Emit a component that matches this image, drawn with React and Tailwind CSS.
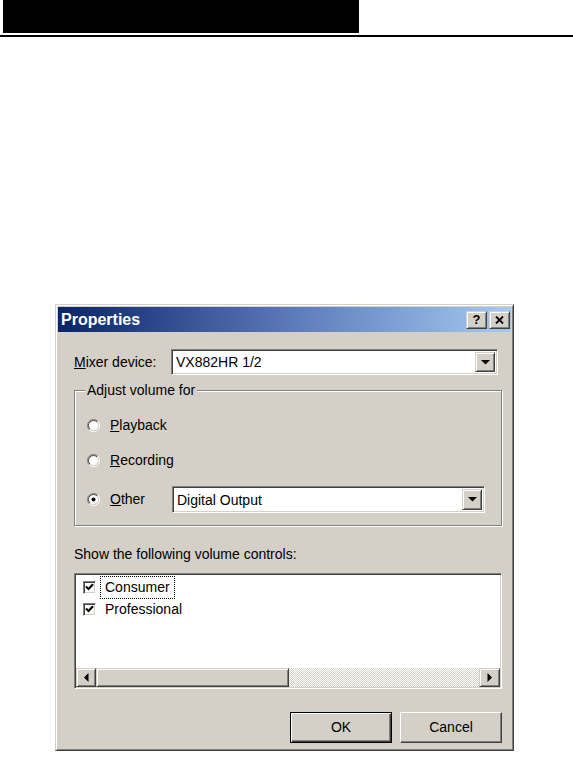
const raised =
  "border border-t-[#d4d0c8] border-l-[#d4d0c8] border-b-[#404040] border-r-[#404040] shadow-[inset_1px_1px_0_#fff,inset_-1px_-1px_0_#808080] bg-[#d4d0c8]";
const sunken =
  "border border-t-[#808080] border-l-[#808080] border-b-white border-r-white shadow-[inset_1px_1px_0_#404040,inset_-1px_-1px_0_#d4d0c8]";

function DownArrow() {
  return (
    <svg width="9" height="5" viewBox="0 0 9 5">
      <path d="M0 0H9L4.5 4.5Z" fill="#000" />
    </svg>
  );
}

function Combo({ text, width, height }) {
  return (
    <div
      className={`${sunken} bg-white flex items-stretch p-[2px]`}
      style={{ width, height }}
    >
      <div className="flex-1 flex items-center pl-[2px] leading-none">{text}</div>
      <div className={`${raised} w-[20px] flex items-center justify-center`}>
        <DownArrow />
      </div>
    </div>
  );
}

function Radio({ checked }) {
  return (
    <svg width="13" height="13" viewBox="0 0 13 13" className="shrink-0">
      <path d="M2.2 10.8A6 6 0 0 1 10.8 2.2" fill="none" stroke="#808080" strokeWidth="1" />
      <path d="M10.8 2.2A6 6 0 0 1 2.2 10.8" fill="none" stroke="#ffffff" strokeWidth="1" />
      <circle cx="6.5" cy="6.5" r="5" fill="#fff" />
      <path d="M2.96 10.04A5 5 0 0 1 10.04 2.96" fill="none" stroke="#404040" strokeWidth="1" />
      <path d="M10.04 2.96A5 5 0 0 1 2.96 10.04" fill="none" stroke="#d4d0c8" strokeWidth="1" />
      {checked && <circle cx="6.5" cy="6.5" r="2" fill="#000" />}
    </svg>
  );
}

function CheckBox() {
  return (
    <div className={`${sunken} bg-white w-[13px] h-[13px] shrink-0 flex items-center justify-center`}>
      <svg width="9" height="8" viewBox="0 0 9 8">
        <path d="M1 3.5L3.5 6L8 1.2" fill="none" stroke="#000" strokeWidth="2.1" />
      </svg>
    </div>
  );
}

function Btn({ children, def }) {
  if (def) {
    return (
      <div className="w-[102px] h-[31px] border border-black">
        <div className="w-full h-full bg-[#d4d0c8] shadow-[inset_1px_1px_0_#fff,inset_-1px_-1px_0_#404040,inset_-2px_-2px_0_#808080] flex items-center justify-center">
          {children}
        </div>
      </div>
    );
  }
  return (
    <div className="w-[102px] h-[31px] bg-[#d4d0c8] border border-t-white border-l-white border-b-[#404040] border-r-[#404040] shadow-[inset_-1px_-1px_0_#808080] flex items-center justify-center">
      {children}
    </div>
  );
}

export default function App() {
  return (
    <div className="w-[573px] h-[762px] bg-white font-['Liberation_Sans',Arial,sans-serif] text-[14px] text-black overflow-hidden">
      <div className="ml-[3px] w-[356px] h-[33px] bg-black" />
      <div className="mt-[2px] h-[2px] bg-black" />

      <div className="ml-[55px] mt-[267px] w-[459px] h-[447px] bg-[#d4d0c8] p-[2px] border border-t-[#d4d0c8] border-l-[#d4d0c8] border-b-[#404040] border-r-[#404040] shadow-[inset_1px_1px_0_#fff,inset_-1px_-1px_0_#808080]">
        {/* title bar */}
        <div className="h-[25px] bg-linear-to-r from-[#0a246a] via-[#5a78b8] to-[#a6caf0] flex items-center justify-between pl-[3px] pr-[1px]">
          <span className="text-white font-bold text-[16px] leading-none">Properties</span>
          <div className="flex gap-[2px]">
            <div className={`${raised} w-[21px] h-[18px] flex items-center justify-center`}>
              <span className="font-bold text-[13px] leading-none">?</span>
            </div>
            <div className={`${raised} w-[21px] h-[18px] flex items-center justify-center`}>
              <svg width="9" height="8" viewBox="0 0 9 8">
                <path d="M1 0.5L8 7.5M8 0.5L1 7.5" stroke="#000" strokeWidth="1.8" />
              </svg>
            </div>
          </div>
        </div>

        <div className="pl-[16px]">
          {/* mixer row */}
          <div className="mt-[17px] flex items-center h-[26px]">
            <span className="w-[97px]">
              <span className="underline">M</span>ixer device:
            </span>
            <Combo text="VX882HR 1/2" width={327} height={26} />
          </div>

          {/* group box */}
          <div className="relative mt-[15px] w-[428px] h-[136px] border border-[#808080] shadow-[1px_1px_0_#fff,inset_1px_1px_0_#fff]">
            <span className="absolute left-[10px] top-[-10px] bg-[#d4d0c8] px-[2px] leading-[18px]">
              Adjust volume for
            </span>
            <div className="pl-[12px] pt-[21px] flex flex-col">
              <div className="h-[27px] flex items-center">
                <Radio />
                <span className="ml-[10px]">
                  <span className="underline">P</span>layback
                </span>
              </div>
              <div className="mt-[8px] h-[27px] flex items-center">
                <Radio />
                <span className="ml-[10px]">
                  <span className="underline">R</span>ecording
                </span>
              </div>
              <div className="mt-[12px] h-[27px] flex items-center">
                <div className="w-[85px] flex items-center">
                  <Radio checked />
                  <span className="ml-[10px]">
                    <span className="underline">O</span>ther
                  </span>
                </div>
                <Combo text="Digital Output" width={313} height={27} />
              </div>
            </div>
          </div>

          <div className="mt-[20px] leading-[16px]">Show the following volume controls:</div>

          {/* listbox */}
          <div className={`${sunken} bg-white mt-[11px] w-[428px] h-[116px] p-[1px] flex flex-col`}>
            <div className="flex-1 pt-[1px] pl-[7px]">
              <div className="h-[22px] flex items-center">
                <CheckBox />
                <span className="ml-[4px] h-[23px] px-[4px] border border-dotted border-black flex items-center">
                  Consumer
                </span>
              </div>
              <div className="h-[22px] flex items-center">
                <CheckBox />
                <span className="ml-[4px] h-[23px] px-[4px] border border-transparent flex items-center">
                  Professional
                </span>
              </div>
            </div>
            <div className="h-[19px] flex">
              <div className={`${raised} w-[20px] flex items-center justify-center`}>
                <svg width="5" height="9" viewBox="0 0 5 9">
                  <path d="M4.5 0V9L0 4.5Z" fill="#000" />
                </svg>
              </div>
              <div className={`${raised} w-[193px]`} />
              <div className="flex-1 bg-[repeating-conic-gradient(#fff_0_25%,#d4d0c8_0_50%)] bg-[length:2px_2px]" />
              <div className={`${raised} w-[21px] flex items-center justify-center`}>
                <svg width="5" height="9" viewBox="0 0 5 9">
                  <path d="M0.5 0V9L5 4.5Z" fill="#000" />
                </svg>
              </div>
            </div>
          </div>

          {/* buttons */}
          <div className="mt-[23px] w-[428px] flex justify-end gap-[8px]">
            <Btn def>OK</Btn>
            <Btn>Cancel</Btn>
          </div>
        </div>
      </div>
    </div>
  );
}
